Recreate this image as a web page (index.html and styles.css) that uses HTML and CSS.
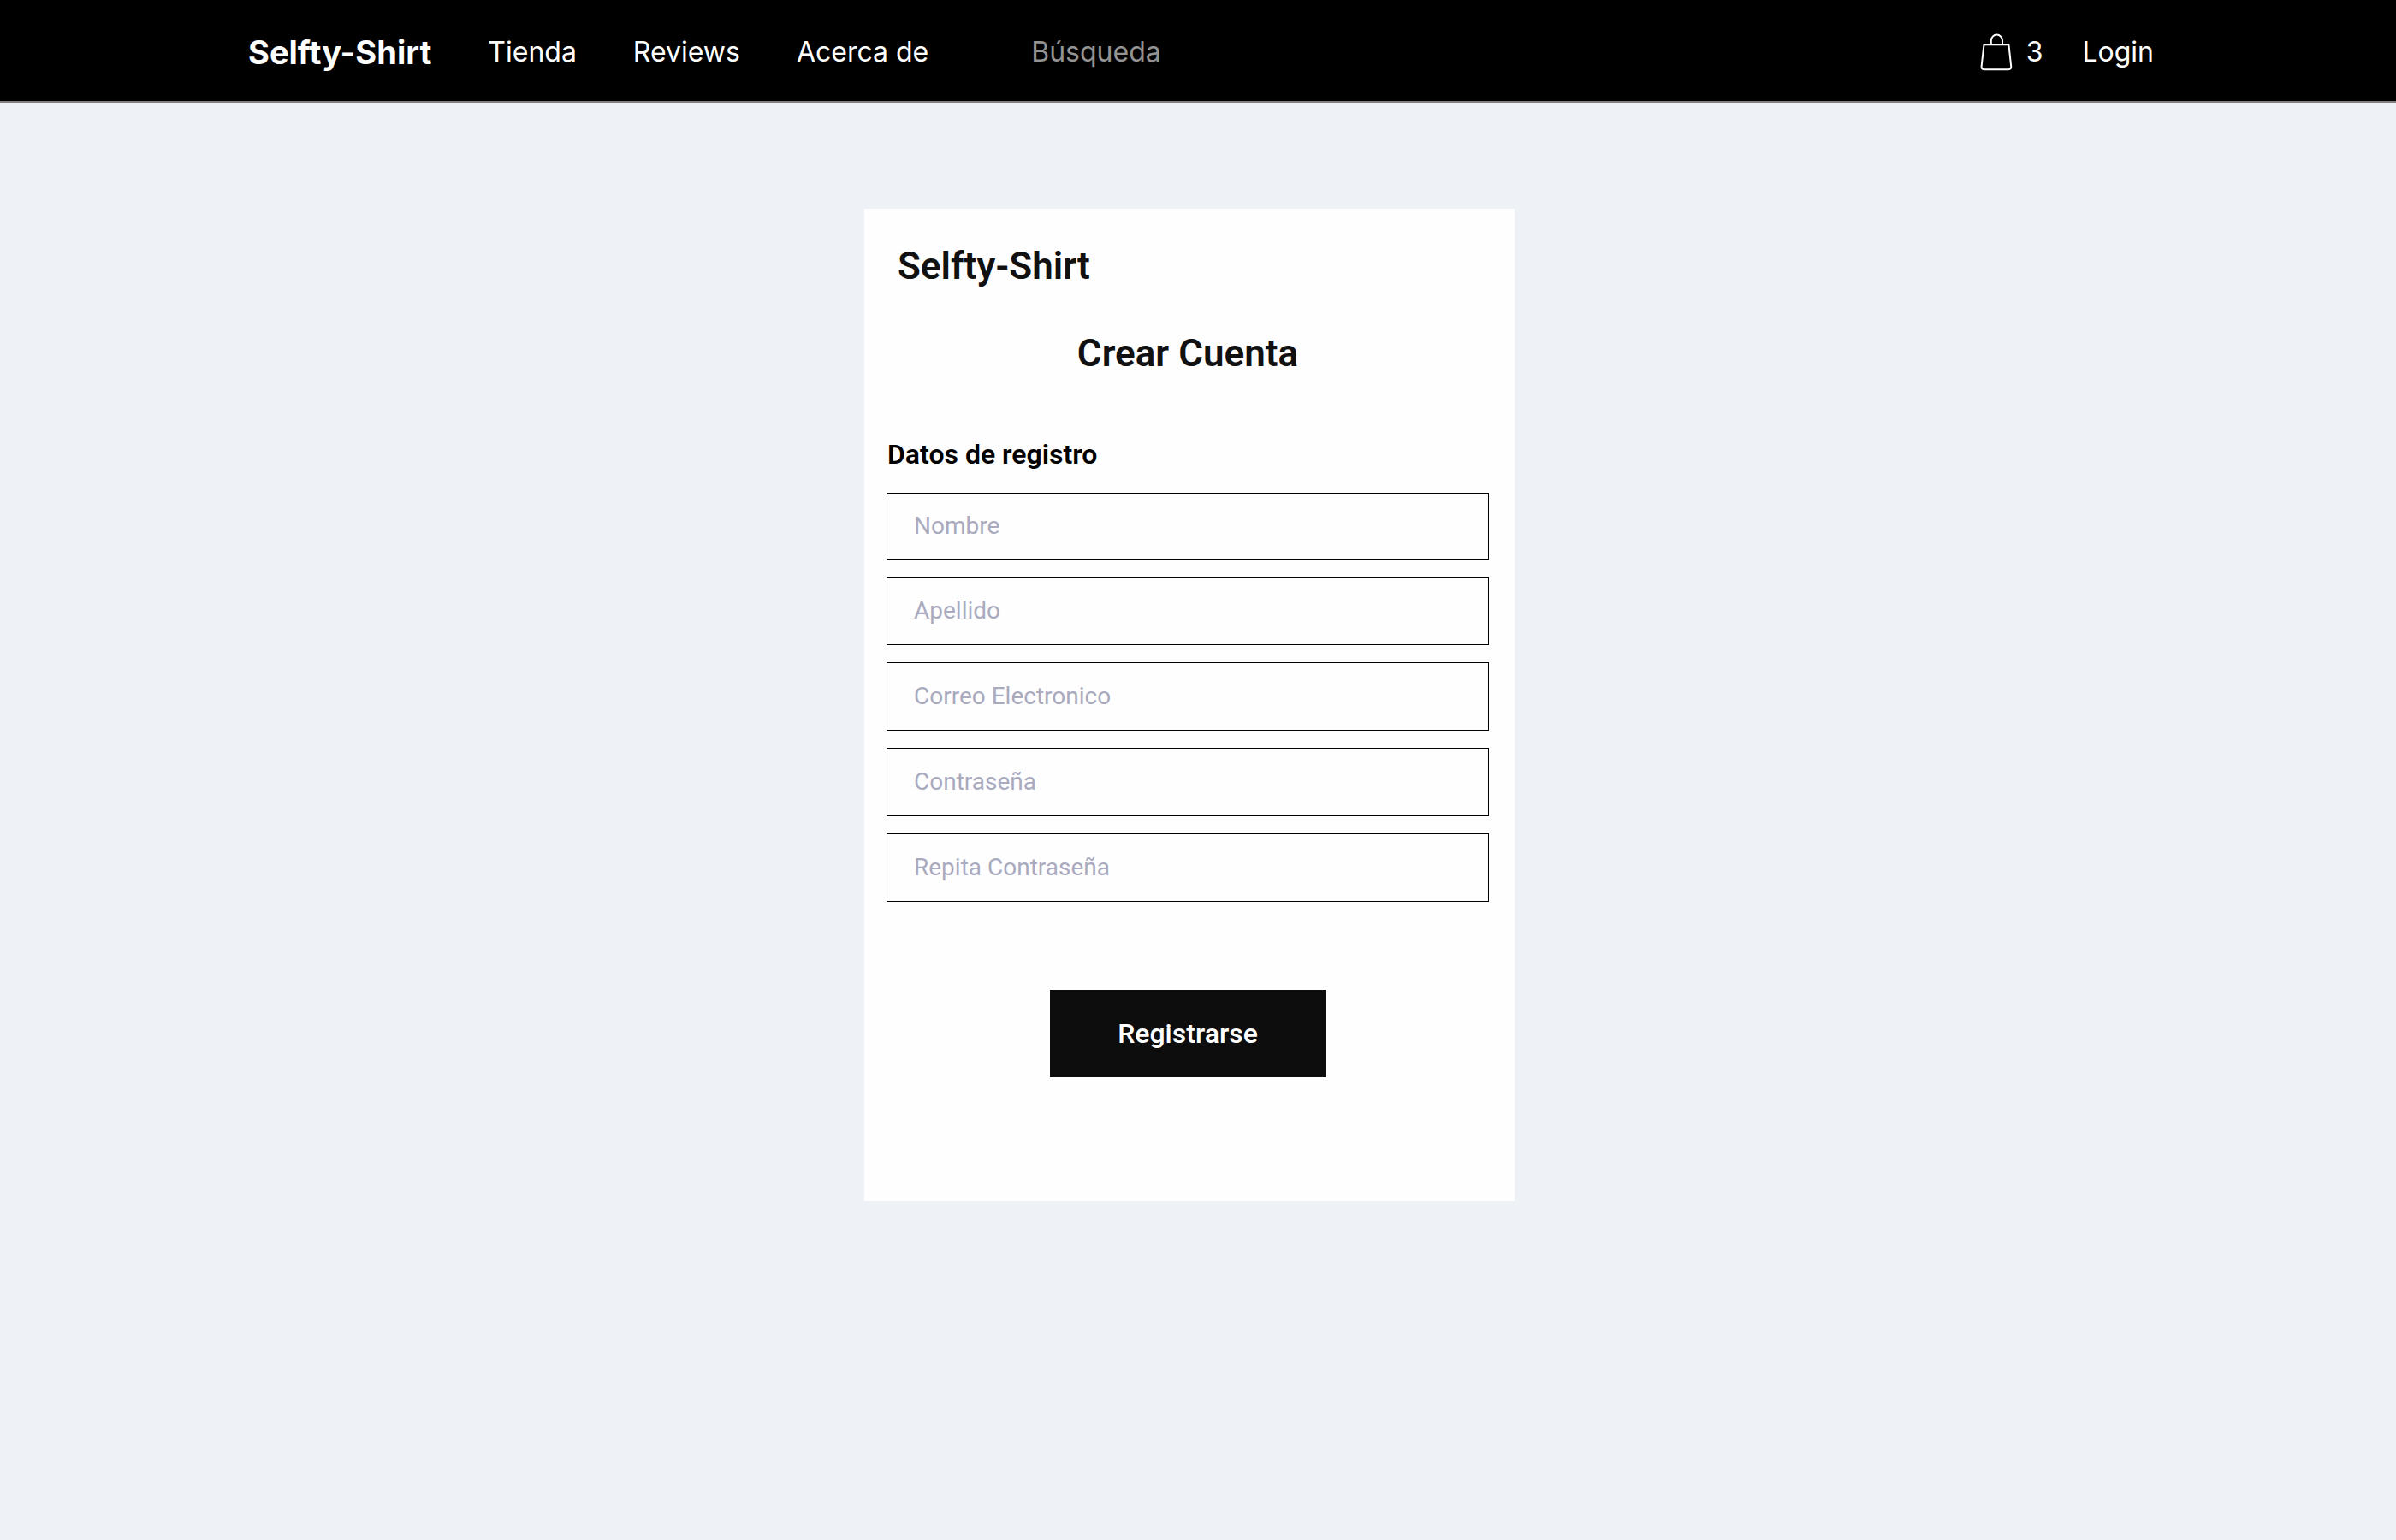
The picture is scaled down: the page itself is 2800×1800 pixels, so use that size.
FILE: index.html
```
<!DOCTYPE html>
<html lang="es">
<head>
  <meta charset="utf-8">
  <meta name="viewport" content="width=device-width, initial-scale=1">
  <title>Selfty-Shirt</title>
  <link rel="stylesheet" href="styles.css">
</head>
<body>
  <header class="site-header">
    <a class="logo" href="#">Selfty-Shirt</a>
    <nav class="main-nav">
      <a href="#">Tienda</a>
      <a href="#">Reviews</a>
      <a href="#">Acerca de</a>
    </nav>
    <input class="search" type="search" placeholder="Búsqueda" aria-label="Búsqueda">
    <div class="account">
      <a class="cart" href="#">
        <svg class="cart-icon" width="38" height="44" viewBox="0 0 38 44" aria-hidden="true">
          <path d="M4.5 13.2H33.4L36.2 38.5Q36.4 42.2 32.6 42.2H5Q1.3 42.2 1.6 38.5Z"/>
          <path d="M12.8 13V8.6A6.6 7 0 0 1 26 8.6V13"/>
        </svg>
        <span>3</span>
      </a>
      <a href="#">Login</a>
    </div>
  </header>

  <main class="page">
    <form class="card">
      <p class="brand">Selfty-Shirt</p>
      <h1 class="title">Crear Cuenta</h1>
      <h2 class="section-title">Datos de registro</h2>
      <div class="fields">
        <input class="field" type="text" placeholder="Nombre" aria-label="Nombre">
        <input class="field" type="text" placeholder="Apellido" aria-label="Apellido">
        <input class="field" type="email" placeholder="Correo Electronico" aria-label="Correo Electronico">
        <input class="field" type="password" placeholder="Contraseña" aria-label="Contraseña">
        <input class="field" type="password" placeholder="Repita Contraseña" aria-label="Repita Contraseña">
      </div>
      <button class="submit" type="submit">Registrarse</button>
    </form>
  </main>
</body>
</html>
```

FILE: styles.css
```
* {
  box-sizing: border-box;
}

body {
  margin: 0;
  min-height: 100vh;
  background: #eef1f6;
  font-family: Roboto, "Liberation Sans", sans-serif;
  color: #111;
}

a {
  color: inherit;
  text-decoration: none;
}

.site-header {
  display: flex;
  align-items: center;
  min-height: 120px;
  padding: 4px 283px 0 290px;
  background: #000;
  border-bottom: 2px solid #837f80;
  color: #fff;
  font-family: Inter, "Liberation Sans", sans-serif;
  font-size: 32px;
  line-height: 40px;
}

.logo {
  margin-right: 66px;
  font-size: 38px;
  font-weight: 700;
}

.main-nav {
  display: flex;
  gap: 66px;
}

.search {
  flex: 1;
  min-width: 0;
  margin: 0 48px 0 120px;
  padding: 0;
  border: 0;
  outline: 0;
  background: transparent;
  color: #fff;
  font: inherit;
}

.search::placeholder {
  color: #939393;
  opacity: 1;
}

.account {
  display: flex;
  align-items: center;
  gap: 46px;
}

.cart {
  display: flex;
  align-items: center;
  gap: 16px;
}

.cart-icon {
  fill: none;
  stroke: #fff;
  stroke-width: 2;
  stroke-linejoin: round;
}

.page {
  display: flex;
  justify-content: center;
  padding: 124px 20px 124px 0;
}

.card {
  display: flex;
  flex-direction: column;
  width: 100%;
  max-width: 760px;
  padding: 41px 30px 145px 26px;
  background: #fefefe;
}

.brand,
.title {
  margin: 0;
  font-size: 44px;
  font-weight: 600;
  line-height: 52px;
}

.brand {
  padding-left: 13px;
}

.title {
  margin-top: 50px;
  text-align: center;
}

.section-title {
  margin: 72px 0 25px 1px;
  color: #000;
  font-size: 32px;
  font-weight: 600;
  line-height: 40px;
}

.fields {
  display: grid;
  gap: 20px;
}

.field {
  width: 100%;
  height: 80px;
  padding: 0 31px 2px;
  border: 1px solid #000;
  border-radius: 0;
  background: transparent;
  color: #111;
  font: inherit;
  font-size: 28px;
}

.field:first-child {
  height: 78px;
}

.field::placeholder {
  color: #a9aabe;
  opacity: 1;
}

.submit {
  align-self: center;
  width: 322px;
  max-width: 100%;
  margin-top: 103px;
  padding: 31px 16px;
  border: 0;
  background: #0d0d0d;
  color: #fff;
  font: inherit;
  font-size: 32px;
  font-weight: 500;
  line-height: 40px;
}
```
